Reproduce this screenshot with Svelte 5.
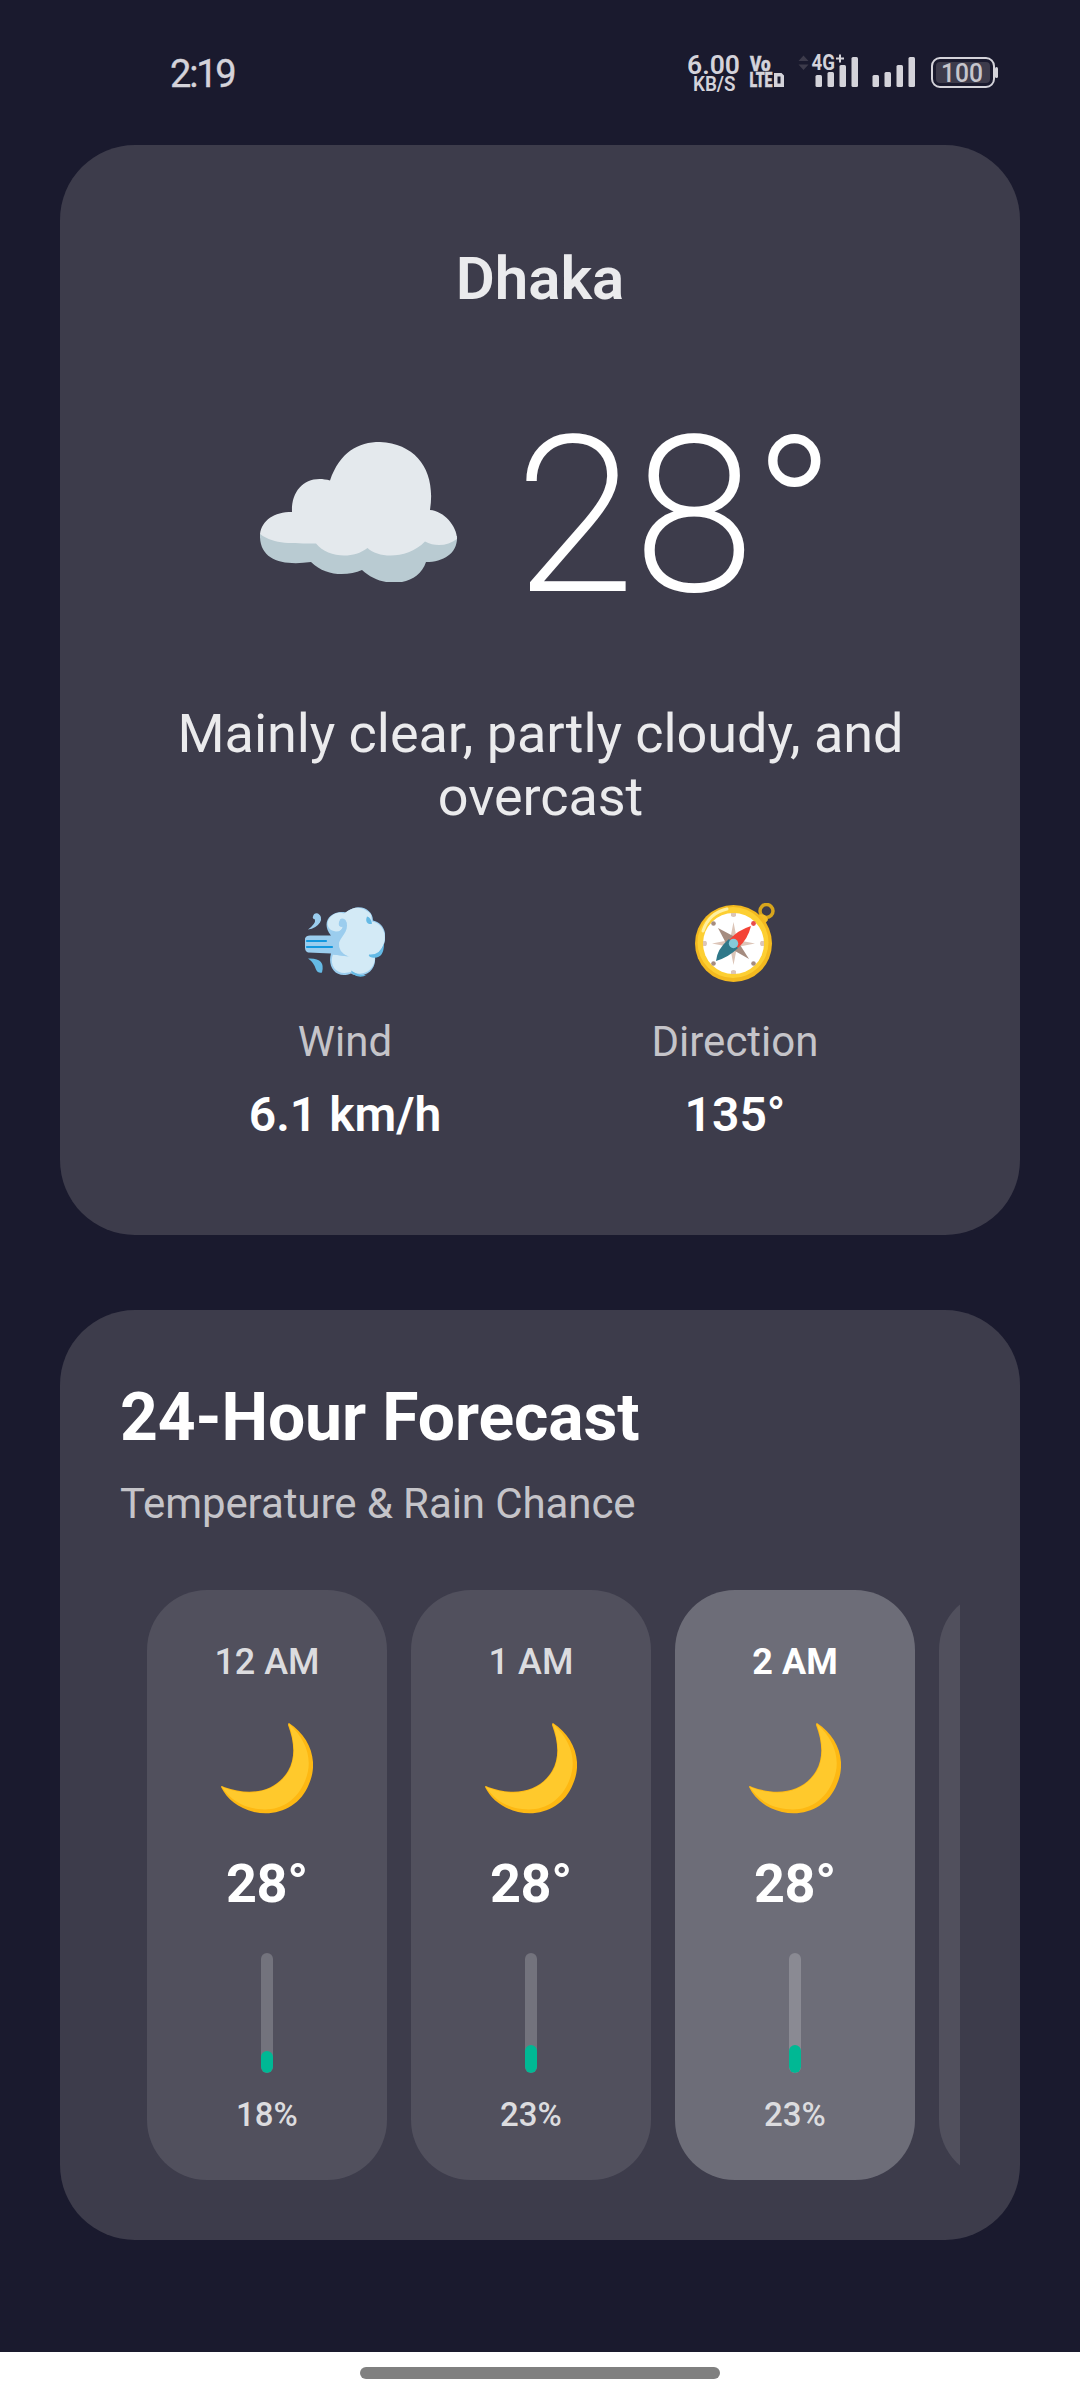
<script>
  const hours = [
    { time: '12 AM', temp: 28, rain: 18 },
    { time: '1 AM', temp: 28, rain: 23 },
    { time: '2 AM', temp: 28, rain: 23, current: true },
    { time: '3 AM', temp: 28, rain: 23 }
  ];
</script>

<div class="screen">
  <header class="status">
    <span class="clock">2:19</span>
    <svg class="indicators" width="320" height="60" viewBox="0 0 320 60">
      <g fill="#d4d3da">
        <text class="st" x="-1" y="28.500" font-size="25.500" font-weight="600" textLength="53" lengthAdjust="spacingAndGlyphs">6.00</text>
        <text class="st" x="5" y="45.500" font-size="20" font-weight="600" textLength="42.500" lengthAdjust="spacingAndGlyphs">KB/S</text>
        <text class="st heavy" x="62" y="26" font-size="19.500" font-weight="900" textLength="20.500" lengthAdjust="spacingAndGlyphs">Vo</text>
        <text class="st heavy" x="61.500" y="42" font-size="19.500" font-weight="900" textLength="23" lengthAdjust="spacingAndGlyphs">LTE</text>
        <path fill-rule="evenodd" d="M86 28h7.500l2.500 2.500V42H86ZM89.500 31.500v7h3v-7Z" />
        <text class="st" x="123.500" y="25" font-size="21.500" font-weight="700" textLength="23.500" lengthAdjust="spacingAndGlyphs">4G</text>
        <path d="M148 12.500h3v-3h2v3h3v2h-3v3h-2v-3h-3Z" />
        <rect x="127.500" y="30" width="6.500" height="12" rx="1.500" />
        <rect x="139.500" y="27" width="6.500" height="15" rx="1.500" />
        <rect x="151.500" y="20" width="6.500" height="22" rx="1.500" />
        <rect x="163.500" y="12" width="6.500" height="30" rx="1.500" />
        <rect x="184.500" y="30" width="6.500" height="12" rx="1.500" />
        <rect x="196.500" y="27" width="6.500" height="15" rx="1.500" />
        <rect x="208.500" y="20" width="6.500" height="22" rx="1.500" />
        <rect x="220.500" y="12" width="6.500" height="30" rx="1.500" />
        <rect x="307" y="22" width="3" height="11" rx="1.500" />
      </g>
      <path d="M110.500 16l5-5.500 5 5.500zM110.500 19.500h10l-5 5.500z" fill="#3d3b4b" />
      <rect x="244" y="13" width="62" height="29" rx="8" fill="none" stroke="#d4d3da" stroke-width="2" />
      <rect x="248" y="17" width="54" height="21" rx="4" fill="#3d3b4b" />
      <text class="st" x="253" y="36.500" font-size="25" font-weight="500" fill="#c6c5cc" textLength="42" lengthAdjust="spacingAndGlyphs">100</text>
    </svg>
  </header>

  <main>
    <section class="card now">
      <h1>Dhaka</h1>
      <div class="reading">
        <svg class="cloud" width="198" height="140" viewBox="0 0 198 140">
          <path fill="#b9cbd2" d="M0 92C-1 118 22 124 51 120C66 135 88 134 102 128C122 147 158 145 166 120C184 120 198 111 197 94L164 88L50 96Z" />
          <path fill="#e4e9ed" d="M0 92C2 78 14 70 32 70C31 47 47 32 70 38.500C80 10 98 0 120 0C158 2 176 30 170 68C184 69 197 84 197 97C188 104 175 105 165 99.500C148 117 119 117 107.500 106C92 118 67 115 56 101.500C32 101 15 103 0 92Z" />
        </svg>
        <span class="temp">28°</span>
      </div>
      <p class="summary">Mainly clear, partly cloudy, and overcast</p>
      <div class="details">
        <div class="detail">
          <svg width="80" height="80" viewBox="0 -2.500 80 80">
            <path fill="#9bcdee" d="M26 30C15 17 26 4 41 7C54-4 68 4 68 15C83 18 85 39 70 51C72 67 56 74 46 68C31 74 22 61 26 48L3 47Q0 46 0 42V33Q1 30 5 30Z" />
            <path fill="#d3eaf6" d="M39 8Q54-4 66 9L67 16C83 19 84 40 70 50C71 65 57 72 47 66C30 72 24 58 28 49L45 51Q36 50 33 42C33 33 42 29 42 20Q42 14 37 14Q33 15 34 20Q36 22 38 21Q37 26 31 26C17 24 22 8 35 7Z" />
            <path fill="#65bae5" d="M62 11Q66 12 67 18Q66 19 63 18Q60 16 62 11ZM64 49Q75 50 79 38Q79 54 67 52Q63 51 64 49ZM46 65Q55 71 62 69Q55 74 47 68ZM3 53Q21 52 17 67Q13 68 11 64Q9 57 3 53Z" />
            <path fill="#9bcdee" d="M8 11Q9 7 13 8Q18 11 15 17Q11 23 3 24Q11 18 10 14Q7 13 8 11Z" />
            <path fill="#9bcdee" d="M35 14Q37 12 40 14Q43 17 40 23Q34 31 34 38Q33 46 43 51L28 49V29Q36 27 38 21Q34 22 34 18Z" />
            <path stroke="#1298df" stroke-width="2.200" stroke-linecap="round" d="M2 35.500H21M2 41.500H27" />
          </svg>
          <span class="label">Wind</span>
          <span class="value">6.1 km/h</span>
        </div>
        <div class="detail">
          <svg width="80" height="80" viewBox="0 0 80 80">
            <circle cx="71.500" cy="8" r="6.500" fill="none" stroke="#d7a51c" stroke-width="3.500" />
            <path fill="#f5bd25" d="M59 15Q66 8 72 14L73 17L69 22Z" />
            <circle cx="38.500" cy="40.500" r="38.500" fill="#f3b91f" />
            <circle cx="38" cy="39.500" r="35.500" fill="#fdcf32" />
            <path d="M8 28Q14 10 32 6" fill="none" stroke="#fff0a0" stroke-width="3" stroke-linecap="round" />
            <circle cx="38.500" cy="40.500" r="30.500" fill="#fff" />
            <g fill="#dcc5b8">
              <path d="M38.500 19L42 37L60 40.500L42 44L38.500 62L35 44L17 40.500L35 37Z" />
              <path d="M36 10h5v3q-2.500 2-5 0zM36 71h5v-3q-2.500-2-5 0zM8 38v5h3q2-2.500 0-5zM69 38v5h-3q-2-2.500 0-5z" />
            </g>
            <path fill="#a58c80" d="M23 25L40 34L54 56L33 44Z" />
            <g fill="#a58c80">
              <circle cx="18.500" cy="20.500" r="2.300" />
              <circle cx="18.500" cy="60.500" r="2.300" />
              <circle cx="58.500" cy="60.500" r="2.300" />
            </g>
            <circle cx="58.500" cy="20.500" r="2.400" fill="#e84b4b" />
            <path fill="#f44336" d="M34 37Q43 27 56 23Q53 36 43 45Z" />
            <path fill="#2f7889" d="M34 36Q22 46 21 58Q34 54 43 45Z" />
            <circle cx="38.500" cy="40.500" r="4.700" fill="#85cada" />
          </svg>
          <span class="label">Direction</span>
          <span class="value">135°</span>
        </div>
      </div>
    </section>

    <section class="card forecast">
      <h2>24-Hour Forecast</h2>
      <p class="sub">Temperature &amp; Rain Chance</p>
      <div class="hours">
        {#each hours as h}
          <article class="hour" class:current={h.current}>
            <span class="time">{h.time}</span>
            <svg class="moon" width="92" height="91" viewBox="0 0 92 91">
              <path fill="#fdb813" d="M68 0C89 14 98 38 88 61C79 84 56 94 33 89C17 85 6 76 0 64Q0 62 3 64C31 74 55 68 67 48C75 34 73 18 67 2Q67 0 68 0Z" />
              <path fill="#ffc92c" d="M68 1C85 16 93 37 84 58C76 78 58 89 37 86C20 84 9 76 1 64C31 76 56 68 68 48C76 33 73 17 68 1Z" />
            </svg>
            <span class="degrees">{h.temp}°</span>
            <div class="track"><div class="fill" style="height: {h.rain}%"></div></div>
            <span class="rain">{h.rain}%</span>
          </article>
        {/each}
      </div>
    </section>
  </main>

  <footer><div class="pill"></div></footer>
</div>

<style>
  :global(body) { background: #1a1a2e; }
  .screen {
    width: 1080px; height: 2400px; display: flex; flex-direction: column;
    background: #1a1a2e; color: #fff; font-family: Roboto, "Liberation Sans", sans-serif; overflow: hidden;
  }
  .status {
    height: 145px; box-sizing: border-box; flex: none; display: flex; justify-content: space-between;
    align-items: flex-start; padding: 45px 72px 0 170px;
  }
  .clock { font-size: 38px; line-height: 58px; letter-spacing: -2.2px; color: #d4d3da; -webkit-text-stroke: .4px #d4d3da; }
  .st { font-family: Roboto, "Liberation Sans", sans-serif; }
  .heavy { stroke: #d4d3da; stroke-width: .5px; }
  .indicators { flex: none; display: block; }
  main { flex: 1; display: flex; flex-direction: column; gap: 75px; padding: 0 60px; }
  .card { background: #3d3c4b; border-radius: 75px; box-sizing: border-box; }
  .now { height: 1090px; padding: 92px 75px 0; display: flex; flex-direction: column; align-items: center; }
  h1, h2, p { margin: 0; }
  h1 { font-size: 60px; line-height: 84px; font-weight: 600; color: #ebebed; }
  .reading { height: 253px; margin-top: 64px; padding-left: 15px; display: flex; align-items: center; gap: 58px; }
  .cloud { display: block; }
  .temp { margin-top: 10px; font-size: 216px; line-height: 253px; font-weight: 200; -webkit-text-stroke: 2px #fff; }
  .summary { margin-top: 64px; padding-left: 1px; width: 760px; text-align: center; font-size: 54px; line-height: 63px; letter-spacing: -.06px; color: #ebebed; }
  .details { margin-top: 75px; align-self: stretch; display: grid; grid-template-columns: 1fr 1fr; padding: 0 15px; }
  .detail { display: flex; flex-direction: column; align-items: center; }
  .label { margin-top: 34px; font-size: 42px; line-height: 50px; color: #c5c4c9; }
  .value { margin-top: 20px; font-size: 48px; line-height: 56px; font-weight: 600; }
  .forecast { height: 930px; padding: 69px 60px 0; }
  h2 { font-size: 66px; line-height: 78px; font-weight: 700; letter-spacing: -.1px; }
  .sub { margin-top: 22px; font-size: 42px; line-height: 50px; letter-spacing: -.08px; color: #c5c4c9; }
  .hours { margin-top: 61px; padding-left: 27px; display: flex; gap: 24px; overflow: hidden; }
  .hour {
    flex: none; width: 240px; height: 590px; box-sizing: border-box; border-radius: 60px; background: #51505d;
    display: flex; flex-direction: column; align-items: center; padding-top: 51px;
  }
  .current { background: #6d6d78; }
  .time { font-size: 36px; line-height: 42px; font-weight: 500; color: #dcdcdf; }
  .current .time { color: #fff; font-weight: 700; }
  .moon { margin-top: 40px; }
  .degrees { margin-top: 38px; font-size: 54px; line-height: 63px; font-weight: 700; letter-spacing: -.3px; }
  .track { margin-top: 38px; width: 12px; height: 120px; border-radius: 6px; background: rgba(255, 255, 255, .2); display: flex; align-items: flex-end; overflow: hidden; }
  .fill { width: 100%; border-radius: 6px; background: #00b894; }
  .rain { margin-top: 22px; font-size: 33px; line-height: 39px; font-weight: 500; color: #dcdcdf; }
  footer { flex: none; height: 48px; box-sizing: border-box; background: #fff; padding-top: 15px; }
  .pill { width: 360px; height: 12px; margin: 0 auto; border-radius: 6px; background: #808080; }
</style>
